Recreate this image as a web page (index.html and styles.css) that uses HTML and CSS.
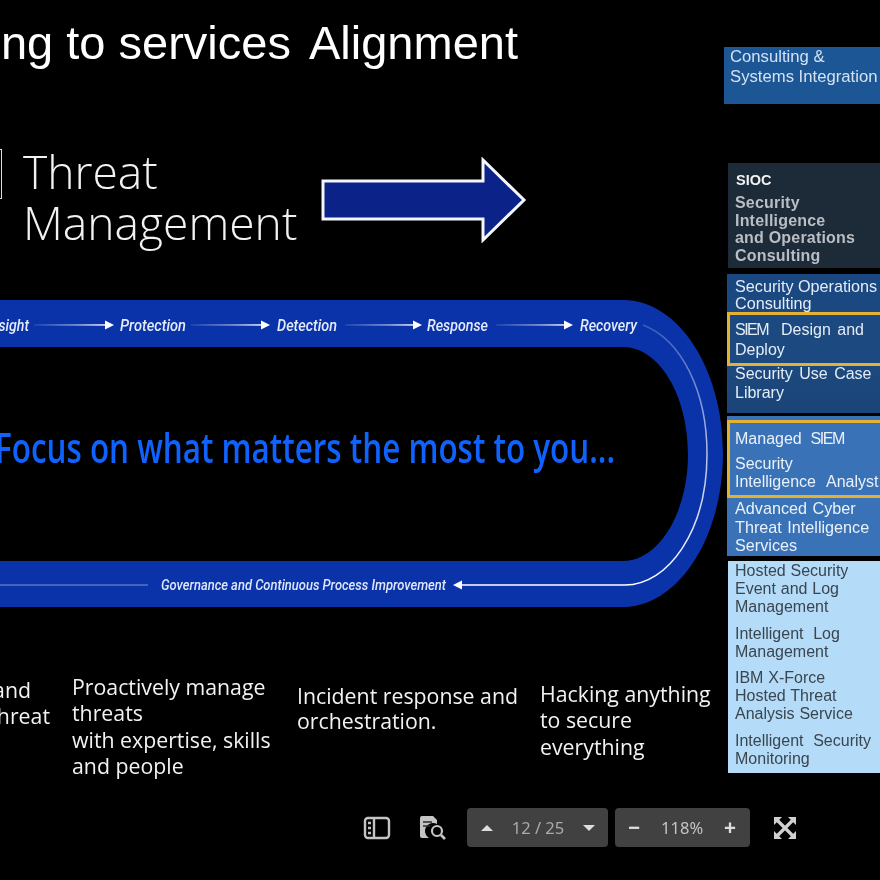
FILE: index.html
```html
<!DOCTYPE html>
<html lang="en">
<head>
<meta charset="utf-8">
<title>Threat Management</title>
<link rel="stylesheet" href="styles.css">
</head>
<body>
<main class="slide">
  <h1 class="title">ing to services <span class="title-end">Alignment</span></h1>

  <div class="logo-bracket"></div>
  <h2 class="heading">Threat<br>Management</h2>

  <svg class="big-arrow" viewBox="0 0 206 86" aria-hidden="true">
    <path d="M2 24H162V3L203 43L162 83V62H2Z" fill="#0b2288" stroke="#f4f6fb" stroke-width="3"/>
  </svg>

  <svg class="loop" viewBox="0 0 730 320">
    <defs>
      <linearGradient id="fadeLeft" x1="0" x2="1" y1="0" y2="0">
        <stop offset="0" stop-color="#fff" stop-opacity=".1"/>
        <stop offset=".6" stop-color="#fff" stop-opacity=".55"/>
        <stop offset="1" stop-color="#fff"/>
      </linearGradient>
      <linearGradient id="fadeArc" x1="0" x2="0" y1="0" y2="1">
        <stop offset="0" stop-color="#fff" stop-opacity=".2"/>
        <stop offset=".5" stop-color="#fff" stop-opacity=".7"/>
        <stop offset="1" stop-color="#fff"/>
      </linearGradient>
    </defs>
    <path fill-rule="evenodd" fill="#0a33aa" d="M-2 4H623C678 4 723 72 723 157C723 242 678 311 623 311H-2V265H623C659 265 688 217 688 158C688 99 659 51 623 51H-2Z"/>
    <path d="M643 29C682 44 707 96 707 158C707 235 668 289 625 289H460" fill="none" stroke="url(#fadeArc)" stroke-width="1.500"/>
    <rect x="0" y="288.400" width="148" height="1.200" fill="#fff" fill-opacity=".4"/>
    <g class="band-label">
      <text x="-13" y="35" textLength="42" lengthAdjust="spacingAndGlyphs">Insight</text>
      <text x="120" y="35" textLength="66" lengthAdjust="spacingAndGlyphs">Protection</text>
      <text x="277" y="35" textLength="60" lengthAdjust="spacingAndGlyphs">Detection</text>
      <text x="427" y="35" textLength="61" lengthAdjust="spacingAndGlyphs">Response</text>
      <text x="580" y="35" textLength="57" lengthAdjust="spacingAndGlyphs">Recovery</text>
      <text x="161" y="294" textLength="285" lengthAdjust="spacingAndGlyphs" class="gov">Governance and Continuous Process Improvement</text>
    </g>
    <g>
      <rect x="34" y="28.200" width="74" height="1.500" fill="url(#fadeLeft)"/>
      <rect x="191" y="28.200" width="74" height="1.500" fill="url(#fadeLeft)"/>
      <rect x="345" y="28.200" width="72" height="1.500" fill="url(#fadeLeft)"/>
      <rect x="496" y="28.200" width="72" height="1.500" fill="url(#fadeLeft)"/>
      <path d="M105 24.500L114 29L105 33.500Z" class="tip"/>
      <path d="M261 24.500L270 29L261 33.500Z" class="tip"/>
      <path d="M413 24.500L422 29L413 33.500Z" class="tip"/>
      <path d="M564 24.500L573 29L564 33.500Z" class="tip"/>
      <path d="M453 289L462 284.500V293.500Z" class="tip"/>
    </g>
    <text class="focus" x="-5" y="167" textLength="620" lengthAdjust="spacingAndGlyphs">Focus on what matters the most to you...</text>
  </svg>

  <p class="note note-a"><span class="note-a-first">and</span>threat</p>
  <p class="note note-b">Proactively manage<br>threats<br>with expertise, skills<br>and people</p>
  <p class="note note-c">Incident response and<br>orchestration.</p>
  <p class="note note-d">Hacking anything<br>to secure<br>everything</p>

  <aside class="services">
    <div class="box consulting">Consulting &amp;<br>Systems Integration</div>

    <div class="box sioc">
      <strong>SIOC</strong>
      <p>Security<br>Intelligence<br>and Operations<br>Consulting</p>
    </div>

    <div class="box ops">
      <p class="ops-first">Security Operations<br>Consulting</p>
      <p class="hl hl-ops"><span class="siem">SIEM</span>&nbsp; Design and<br>Deploy</p>
      <p class="ops-last">Security Use Case<br>Library</p>
    </div>

    <div class="box managed">
      <div class="hl hl-managed">
        <p>Managed&nbsp; <span class="siem">SIEM</span></p>
        <p class="gap">Security<br>Intelligence&nbsp; Analyst</p>
      </div>
      <p class="managed-last">Advanced Cyber<br>Threat Intelligence<br>Services</p>
    </div>

    <div class="box hosted">
      <p>Hosted Security<br>Event and Log<br>Management</p>
      <p>Intelligent&nbsp; Log<br>Management</p>
      <p>IBM X-Force<br>Hosted Threat<br>Analysis Service</p>
      <p>Intelligent&nbsp; Security<br>Monitoring</p>
    </div>
  </aside>

  <nav class="toolbar">
    <button class="tool panel-tool" aria-label="Toggle sidebar">
      <svg viewBox="0 0 28 24" width="28" height="24"><rect x="2" y="2" width="24" height="20" rx="3" fill="none" stroke="#c4c4c4" stroke-width="2.400"/><path d="M11 2v20" stroke="#c4c4c4" stroke-width="2.400"/><path d="M5 7h3M5 12h3M5 17h3" stroke="#c4c4c4" stroke-width="2.600"/></svg>
    </button>
    <button class="tool find-tool" aria-label="Find">
      <svg viewBox="0 0 28 26" width="28" height="26"><path d="M1 3a2 2 0 0 1 2-2h11l4 4v4a8 8 0 0 0-8 14H3a2 2 0 0 1-2-2Z" fill="#c4c4c4"/><path d="M4 7h9M4 11h7" stroke="#2b2b2b" stroke-width="1.500"/><circle cx="18" cy="16" r="5" fill="none" stroke="#c4c4c4" stroke-width="2.200"/><path d="M22 20l4 4" stroke="#c4c4c4" stroke-width="2.600"/></svg>
    </button>
    <div class="group pager">
      <span class="tri up"></span>
      <span class="val">12 / 25</span>
      <span class="tri down"></span>
    </div>
    <div class="group zoomer">
      <span class="sign">−</span>
      <span class="val">118%</span>
      <span class="sign">+</span>
    </div>
    <button class="tool full-tool" aria-label="Full screen">
      <svg viewBox="0 0 26 26" width="26" height="26"><path d="M2 2h8L7.500 4.500 2 10ZM24 2v8L21.500 7.500 16 2ZM2 24v-8L4.500 18.500 10 24ZM24 24h-8L18.500 21.500 24 16Z" fill="#d0d0d0"/><path d="M5 5L21 21M21 5L5 21" stroke="#d0d0d0" stroke-width="3.200"/></svg>
    </button>
  </nav>
</main>
</body>
</html>
```
FILE: styles.css
```css
* { box-sizing: border-box; }
html, body { margin: 0; padding: 0; background: #000; }
p, h1, h2 { margin: 0; font-weight: normal; }

.slide {
  position: relative;
  width: 880px;
  height: 880px;
  overflow: hidden;
  background: #000;
  color: #fff;
  filter: blur(.45px);
}

.title {
  position: absolute;
  right: 362px;
  top: 16px;
  font: 47px/54px "Liberation Sans", Arial, sans-serif;
  white-space: nowrap;
}
.title-end { margin-left: 5px; }

.logo-bracket {
  position: absolute;
  left: -4px;
  top: 149px;
  width: 6px;
  height: 50px;
  border: 1px solid #ddd;
  border-left: 0;
}

.heading {
  position: absolute;
  left: 23px;
  top: 146px;
  font: 300 46.200px/51px "Open Sans", sans-serif;
  color: #f2f2f2;
}

.big-arrow {
  position: absolute;
  left: 321px;
  top: 157px;
  width: 206px;
  height: 86px;
}

.loop {
  position: absolute;
  left: 0;
  top: 296px;
  width: 730px;
  height: 320px;
  overflow: visible;
}

.band-label text {
  font: italic 500 17px "Roboto", sans-serif;
  fill: #e4ebfa;
}
.band-label .gov { font-size: 15px; fill: #dfe7f8; }
.tip { fill: #fff; }
.focus {
  font: 600 42px "Open Sans", sans-serif;
  fill: #0f62fe;
}

.note {
  position: absolute;
  font: 400 21.300px/26.300px "Open Sans", sans-serif;
  color: #f2f2f2;
  white-space: nowrap;
}
.note-a { left: -32px; top: 677px; width: 82px; text-align: right; }
.note-a-first { display: block; padding-right: 19px; }
.note-b { left: 72px; top: 674px; }
.note-c { left: 297px; top: 683px; line-height: 25px; }
.note-d { left: 540px; top: 681px; }

.services {
  position: absolute;
  left: 724px;
  top: 47px;
  width: 156px;
  display: flex;
  flex-direction: column;
  font: 16px/18px "Liberation Sans", Arial, sans-serif;
}

.box { white-space: nowrap; }
.siem { letter-spacing: -1.500px; }

.consulting {
  height: 57px;
  padding: 0 0 0 6px;
  line-height: 20px;
  background: #1c5694;
  color: #d3e2f2;
  font-size: 16.700px;
}

.sioc {
  margin: 59px 0 0 4px;
  height: 105px;
  padding: 8px 0 0 7px;
  background: #1d2a38;
  color: #b9bec4;
}
.sioc strong { display: block; margin-left: 1px; color: #f2f2f2; font-size: 14.500px; }
.sioc p { margin-top: 5px; line-height: 17.500px; font-weight: bold; letter-spacing: .2px; }

.ops {
  margin: 6px 0 0 3px;
  height: 139px;
  padding: 4px 0 0 8px;
  background: linear-gradient(#1a4780, #1c4a80 60%, #1b4478);
  color: #e4ecf5;
}
.ops-first { line-height: 17px; height: 34px; font-size: 16.200px; }
.hl {
  border: 3px solid #e5b133;
}
.hl-ops {
  width: 160px;
  height: 54px;
  margin: 0 0 -2px -8px;
  padding: 5px 0 0 5px;
  line-height: 20px;
  word-spacing: 2px;
}
.ops-last { line-height: 19px; word-spacing: 2px; }

.managed {
  margin: 3px 0 0 3px;
  height: 140px;
  padding: 4px 0 0 8px;
  background: #3a72b8;
  color: #eaf1f9;
}
.hl-managed {
  width: 160px;
  height: 78px;
  margin-left: -8px;
  padding: 7px 0 0 5px;
  line-height: 18px;
}
.hl-managed .gap { margin-top: 7px; word-spacing: 1px; }
.managed-last { line-height: 18.500px; padding-top: 1px; word-spacing: 1px; font-size: 16.200px; }

.hosted {
  margin: 5px 0 0 4px;
  height: 212px;
  padding: 1px 0 0 7px;
  background: #b4dcf8;
  color: #3a4550;
  display: flex;
  flex-direction: column;
  gap: 8.700px;
}
.hosted p { word-spacing: .4px; }

.toolbar {
  position: absolute;
  left: 363px;
  top: 808px;
  display: flex;
  align-items: center;
  height: 39px;
}
.tool {
  display: flex;
  align-items: center;
  justify-content: center;
  padding: 0;
  border: 0;
  background: none;
}
.panel-tool { width: 28px; margin-right: 28px; }
.find-tool { width: 28px; margin-right: 20px; }
.full-tool { width: 26px; margin-left: 22px; }
.group {
  display: flex;
  align-items: center;
  justify-content: space-between;
  height: 39px;
  background: #414141;
  border-radius: 4px;
  color: #aaa;
  font: 16.500px "Noto Sans", sans-serif;
}
.pager { width: 141px; padding: 0 13px 0 14px; margin-right: 7px; }
.zoomer { width: 135px; padding: 0 14px 0 13px; color: #c4c4c4; }
.tri { width: 0; height: 0; border: 6px solid transparent; }
.tri.up { border-top: 0; border-bottom: 6px solid #ddd; }
.tri.down { border-bottom: 0; border-top: 6px solid #ddd; }
.sign { font-size: 21px; line-height: 1; color: #ddd; font-weight: bold; }
```
